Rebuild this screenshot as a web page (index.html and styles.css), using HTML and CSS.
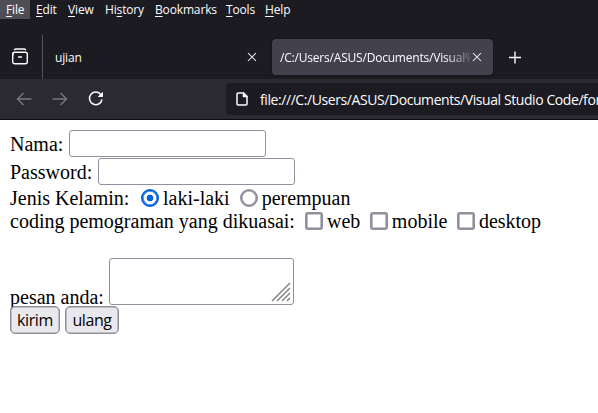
FILE: index.html
```html
<!DOCTYPE html>
<html lang="id">
<head>
<meta charset="utf-8">
<title>form</title>
<link rel="stylesheet" href="styles.css">
</head>
<body>
<nav class="menubar">
  <span class="menu file"><u>F</u>ile</span><span class="menu edit"><u>E</u>dit</span><span class="menu view"><u>V</u>iew</span><span class="menu history">Hi<u>s</u>tory</span><span class="menu bookmarks"><u>B</u>ookmarks</span><span class="menu tools"><u>T</u>ools</span><span class="menu help"><u>H</u>elp</span>
</nav>
<div class="tabs">
  <svg class="archive" width="18" height="18" viewBox="0 0 18 18" fill="none" stroke="#fbfbfe" stroke-width="1.4" stroke-linecap="round"><path d="M3.5 1.7Q4 1 5 1h8q1 0 1.5.7"/><rect x="1.7" y="4.2" width="14.6" height="11.6" rx="2"/><path d="M2 7V5.5M7.5 9h3"/></svg>
  <div class="tab first"><span class="tab-title">ujian</span><svg class="close" width="10" height="10" viewBox="0 0 10 10" stroke="#fbfbfe" stroke-width="1.05"><path d="M1 1l8 8M9 1L1 9"/></svg></div>
  <div class="tab active"><span class="tab-title path">/C:/Users/ASUS/Documents/Visual%</span><svg class="close" width="10" height="10" viewBox="0 0 10 10" stroke="#fbfbfe" stroke-width="1.05"><path d="M1 1l8 8M9 1L1 9"/></svg></div>
  <svg class="plus" width="14" height="14" viewBox="0 0 14 14" stroke="#fbfbfe" stroke-width="1.4"><path d="M1 7.5h12M7 1.5v12"/></svg>
</div>
<div class="toolbar">
  <svg class="nav" width="16" height="14" viewBox="0 0 16 14" fill="none" stroke="#77767d" stroke-width="1.4"><path d="M15.5 7H1.5M7.5 1L1.5 7l6 6"/></svg>
  <svg class="nav" width="16" height="14" viewBox="0 0 16 14" fill="none" stroke="#77767d" stroke-width="1.4"><path d="M.5 7h14M8.5 1l6 6-6 6"/></svg>
  <svg class="reload" width="16" height="16" viewBox="0 0 16 16" fill="none" stroke="#fbfbfe" stroke-width="1.5"><path d="M13 3.8A6.300 6.300 0 1 0 14 8.500"/><path d="M14.500 1.500v4h-4z" fill="#fbfbfe" stroke-width="1"/></svg>
  <div class="address">
    <svg width="12" height="14" viewBox="0 0 12 14" fill="none" stroke="#fbfbfe" stroke-width="1.5" stroke-linejoin="round"><path d="M7.500 1H2Q1 1 1 2v10q0 1 1 1h8q1 0 1-1V4.500z"/><path d="M7.500 1v3.500H11z" fill="#fbfbfe"/></svg>
    <span class="url">file:///C:/Users/ASUS/Documents/Visual Studio Code/for</span>
  </div>
</div>
<form class="page">
  <div class="row name"><label>Nama:</label><input class="field" type="text"></div>
  <div class="row password"><label>Password:</label><input class="field" type="password"></div>
  <div class="row gender"><label>Jenis Kelamin:</label><i class="radio checked"></i><span>laki-laki</span><i class="radio"></i><span>perempuan</span></div>
  <div class="row skills"><label>coding pemograman yang dikuasai:</label><i class="check"></i><span>web</span><i class="check"></i><span>mobile</span><i class="check"></i><span>desktop</span></div>
  <div class="row message"><label>pesan anda:</label><div class="area"><svg width="20" height="20" viewBox="0 0 20 20" stroke="#858585" stroke-width="1.5" fill="none"><path d="M1 19L19 1M6 19L19 6M11 19l8-8M16 19l3-3"/></svg></div></div>
  <div class="buttons"><button type="button" class="send">kirim</button><button type="button" class="reset">ulang</button></div>
</form>
</body>
</html>
```
FILE: styles.css
```css
* { box-sizing: border-box; }
body { margin: 0; width: 598px; height: 413px; overflow: hidden; background: #fff; color: #000; font-family: "Liberation Serif", serif; }
svg { display: block; flex: none; }
.menubar { height: 35px; background: #1c1b22; color: #fbfbfe; display: flex; font: 12px/20px "Open Sans", sans-serif; letter-spacing: -.15px; }
.menu { height: 19px; padding-left: 6px; flex: none; white-space: nowrap; }
.menu u { text-underline-offset: 2px; text-decoration-skip-ink: none; }
.file { width: 30px; background: #4f4e55; }
.edit { width: 32px; }
.view { width: 37px; }
.history { width: 50px; }
.bookmarks { width: 71px; }
.tools { width: 39px; }
.tabs { height: 44px; background: #1c1b22; color: #fbfbfe; display: flex; align-items: center; font: 12px/18px "Open Sans", sans-serif; }
.archive { margin-left: 11px; }
.tab { display: flex; align-items: center; }
.tab-title { padding-top: 2px; letter-spacing: -.15px; }
.first { width: 229px; height: 44px; margin-left: 13px; border-left: 1px solid #55545c; padding: 0 14px 0 12px; justify-content: space-between; }
.active { width: 221px; height: 36px; margin-left: 1px; border-radius: 4px; background: #42414d; padding: 0 11px 0 8px; justify-content: space-between; box-shadow: 0 0 3px #111; }
.path { width: 190px; overflow: hidden; white-space: nowrap; letter-spacing: -.2px; mask-image: linear-gradient(90deg, #000 165px, transparent 196px); }
.plus { margin-left: 15px; }
.toolbar { height: 41px; background: #2b2a33; border-bottom: 1px solid #0c0c0d; display: flex; align-items: center; padding-left: 16px; }
.nav { margin-right: 20px; }
.reload { margin-right: 122px; }
.address { flex: 1; min-width: 0; height: 32px; border-radius: 4px 0 0 4px; background: #1c1b22; color: #fbfbfe; display: flex; align-items: center; gap: 12px; padding-left: 10px; overflow: hidden; font: 14px/20px "Open Sans", sans-serif; }
.url { white-space: nowrap; letter-spacing: -.42px; padding-top: 2px; }
.page { margin: 0; padding: 10px 10px 0; font-size: 20px; line-height: 24px; }
.row { display: flex; align-items: center; white-space: nowrap; }
.name { height: 28px; gap: 6px; }
.password { height: 27px; gap: 6px; }
.name label { width: 53px; }
.password label { width: 82px; }
.field { width: 197px; height: 27px; border: 1px solid #8f8f9d; border-radius: 3px; padding: 0 4px; background: #fff; outline: 0; }
.name .field { align-self: flex-start; }
.gender { height: 25px; }
.gender label { width: 131px; }
.radio, .check { width: 18px; height: 18px; border: 2px solid #8f8f9d; box-shadow: inset 0 0 0 .6px #8f8f9d; margin-right: 3px; flex: none; }
.radio { border-radius: 50%; }
.gender .checked { border-color: #0060df; box-shadow: inset 0 0 0 .6px #0060df; background: radial-gradient(circle, #0060df 3px, #fff 3.7px); margin-right: 4px; }
.gender span { margin-right: 10px; }
.gender .radio:not(.checked) { margin-right: 4px; }
.skills { height: 24px; margin-top: -1px; }
.skills label { width: 295px; }
.skills span { margin-right: 9.5px; }
.check { border-radius: 3px; margin-right: 4px; }
.message { height: 72px; align-items: flex-end; }
.message label { width: 99px; height: 20px; line-height: 24px; }
.area { width: 185px; height: 47px; border: 1px solid #8f8f9d; border-radius: 3px; display: flex; align-items: flex-end; justify-content: flex-end; padding: 2px; }
.buttons { display: flex; gap: 5px; margin-top: 1px; }
button { height: 28px; border: 1px solid #8f8f9d; border-radius: 5px; box-shadow: inset 0 0 0 .5px #8f8f9d; background: #e9e9ed; color: #000; padding: 0; font: 16px/24px "Open Sans", sans-serif; letter-spacing: -.4px; }
.send { width: 50px; }
.reset { width: 54px; }
```
